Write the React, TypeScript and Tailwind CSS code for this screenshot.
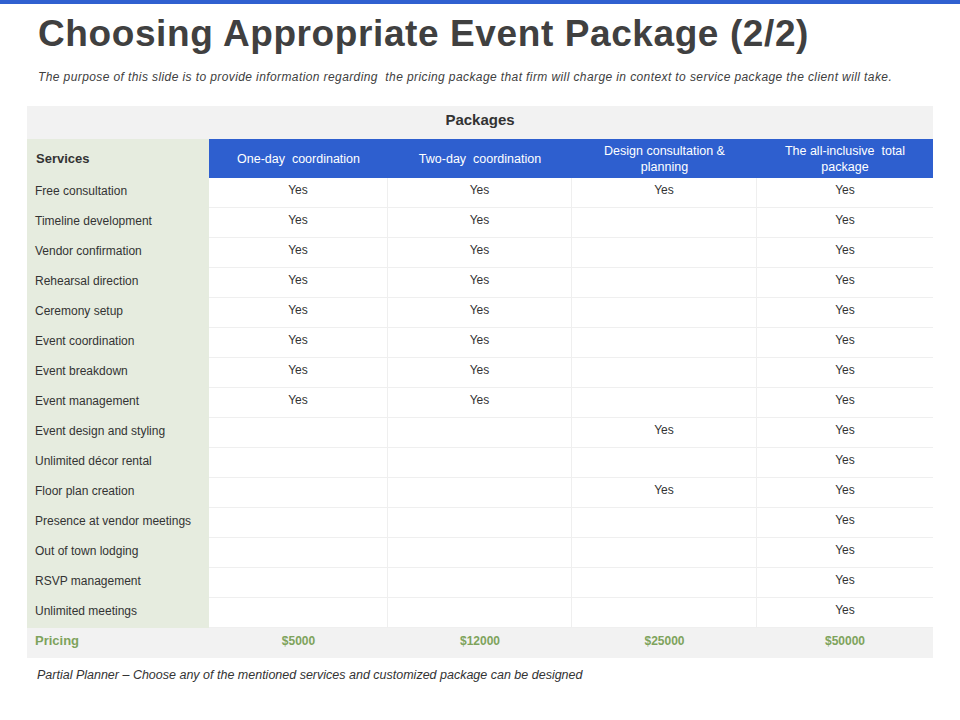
import React from "react";

const rows: [string, boolean, boolean, boolean, boolean][] = [
  ["Free consultation", true, true, true, true],
  ["Timeline development", true, true, false, true],
  ["Vendor confirmation", true, true, false, true],
  ["Rehearsal direction", true, true, false, true],
  ["Ceremony setup", true, true, false, true],
  ["Event coordination", true, true, false, true],
  ["Event breakdown", true, true, false, true],
  ["Event management", true, true, false, true],
  ["Event design and styling", false, false, true, true],
  ["Unlimited décor rental", false, false, false, true],
  ["Floor plan creation", false, false, true, true],
  ["Presence at vendor meetings", false, false, false, true],
  ["Out of town lodging", false, false, false, true],
  ["RSVP management", false, false, false, true],
  ["Unlimited meetings", false, false, false, true],
];

const grid = "grid grid-cols-[182px_179px_184px_185px_176px]";

export default function App() {
  return (
    <div className="w-[960px] h-[720px] bg-white relative" style={{ fontFamily: "'Liberation Sans', Arial, sans-serif" }}>
      <div className="h-[4px] bg-[#3060d0]" />
      <h1 className="ml-[38px] mt-[10px] text-[37px] leading-[40px] font-bold text-[#404040] tracking-[0.6px]">
        Choosing Appropriate Event Package (2/2)
      </h1>
      <p className="ml-[38px] mt-[14px] text-[12px] italic text-[#404040] tracking-[0.4px]">
        The purpose of this slide is to provide information regarding&nbsp; the pricing package that firm will charge in context to service package the client will take.
      </p>
      <div className="ml-[27px] mt-[20px] w-[906px] text-[12px] text-[#333]">
        <div className="h-[33px] bg-[#f2f2f2] flex items-center justify-center font-bold text-[15px] text-[#333] pb-[4px]">Packages</div>
        <div className={`${grid} h-[39px]`}>
          <div className="bg-[#e6ecdf] flex items-center pl-[9px] font-bold text-[13px] text-[#333]">Services</div>
          {["One-day  coordination", "Two-day  coordination", "Design consultation & planning", "The all-inclusive  total package"].map((t, i) => (
            <div key={i} className={`bg-[#2e5fcf] text-white flex items-center justify-center text-center text-[12.5px] leading-[16px] whitespace-pre-wrap ${i >= 2 ? "px-[22px]" : ""}`}>{t}</div>
          ))}
        </div>
        {rows.map((r, i) => (
          <div key={i} className={`${grid} h-[30px]`}>
            <div className="bg-[#e6ecdf] flex items-center pl-[8px] pb-[5px] text-[12px] text-[#333]">{r[0]}</div>
            {[1, 2, 3, 4].map((c) => (
              <div key={c} className={`flex items-center justify-center pb-[5px] border-b border-[#efefef] ${c < 4 ? "border-r" : ""}`}>
                {r[c] ? "Yes" : ""}
              </div>
            ))}
          </div>
        ))}
        <div className={`${grid} h-[30px] bg-[#f2f2f2] font-bold text-[#7ea35c]`}>
          <div className="flex items-center pl-[8px] pb-[5px] text-[13px]">Pricing</div>
          {["$5000", "$12000", "$25000", "$50000"].map((p) => (
            <div key={p} className="flex items-center justify-center pb-[5px]">{p}</div>
          ))}
        </div>
      </div>
      <p className="ml-[37px] mt-[8px] text-[12.5px] italic text-[#333] tracking-[0px]">
        Partial Planner – Choose any of the mentioned services and customized package can be designed
      </p>
    </div>
  );
}
